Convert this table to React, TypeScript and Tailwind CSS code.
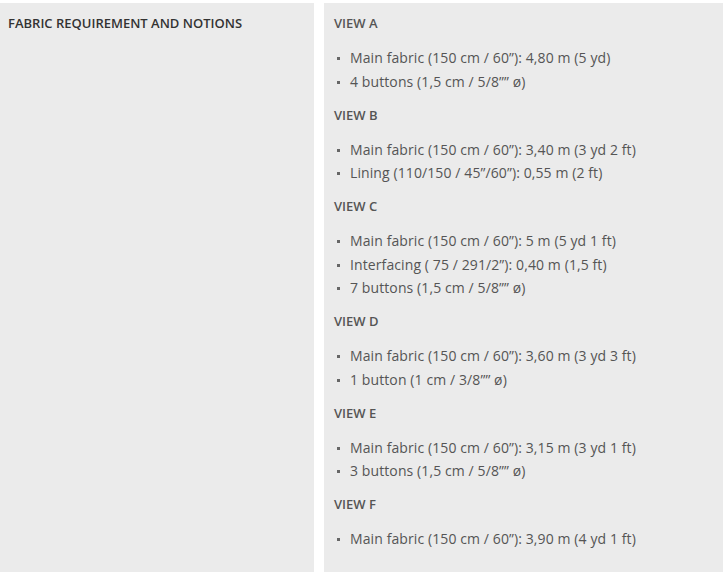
const views = [
  { name: "VIEW A", items: ["Main fabric (150 cm / 60”): 4,80 m (5 yd)", "4 buttons (1,5 cm / 5/8”” ø)"] },
  { name: "VIEW B", items: ["Main fabric (150 cm / 60”): 3,40 m (3 yd 2 ft)", "Lining (110/150 / 45”/60”): 0,55 m (2 ft)"] },
  {
    name: "VIEW C",
    items: [
      "Main fabric (150 cm / 60”): 5 m (5 yd 1 ft)",
      "Interfacing ( 75 / 291/2”): 0,40 m (1,5 ft)",
      "7 buttons (1,5 cm / 5/8”” ø)",
    ],
  },
  { name: "VIEW D", items: ["Main fabric (150 cm / 60”): 3,60 m (3 yd 3 ft)", "1 button (1 cm / 3/8”” ø)"] },
  { name: "VIEW E", items: ["Main fabric (150 cm / 60”): 3,15 m (3 yd 1 ft)", "3 buttons (1,5 cm / 5/8”” ø)"] },
  { name: "VIEW F", items: ["Main fabric (150 cm / 60”): 3,90 m (4 yd 1 ft)"] },
];

const App = () => {
  return (
    <div className="w-[723px] h-[576px] bg-white pt-[3px] flex gap-[10px] font-['Open_Sans',sans-serif]">
      {/* label column */}
      <div className="w-[314px] h-[569px] bg-[#ebebeb] px-[8px] pt-[10px]">
        <h3 className="text-[13px] leading-[20px] font-semibold text-[#333]">FABRIC REQUIREMENT AND NOTIONS</h3>
      </div>

      {/* values column */}
      <div className="flex-1 h-[569px] bg-[#ebebeb] px-[10px] pt-[10px]">
        {views.map((v) => (
          <div key={v.name} className="mb-[11.75px]">
            <h4 className="text-[13px] leading-[20px] font-semibold text-[#555]">{v.name}</h4>
            <ul className="mt-[12.75px]">
              {v.items.map((it) => (
                <li key={it} className="flex items-center h-[23.5px] text-[14px] tracking-[0.1px] text-[#555]">
                  <span className="w-[3px] h-[3px] bg-[#666] ml-[3px] mr-[10px] mt-[2px]" />
                  {it}
                </li>
              ))}
            </ul>
          </div>
        ))}
      </div>
    </div>
  );
};

export default App;
